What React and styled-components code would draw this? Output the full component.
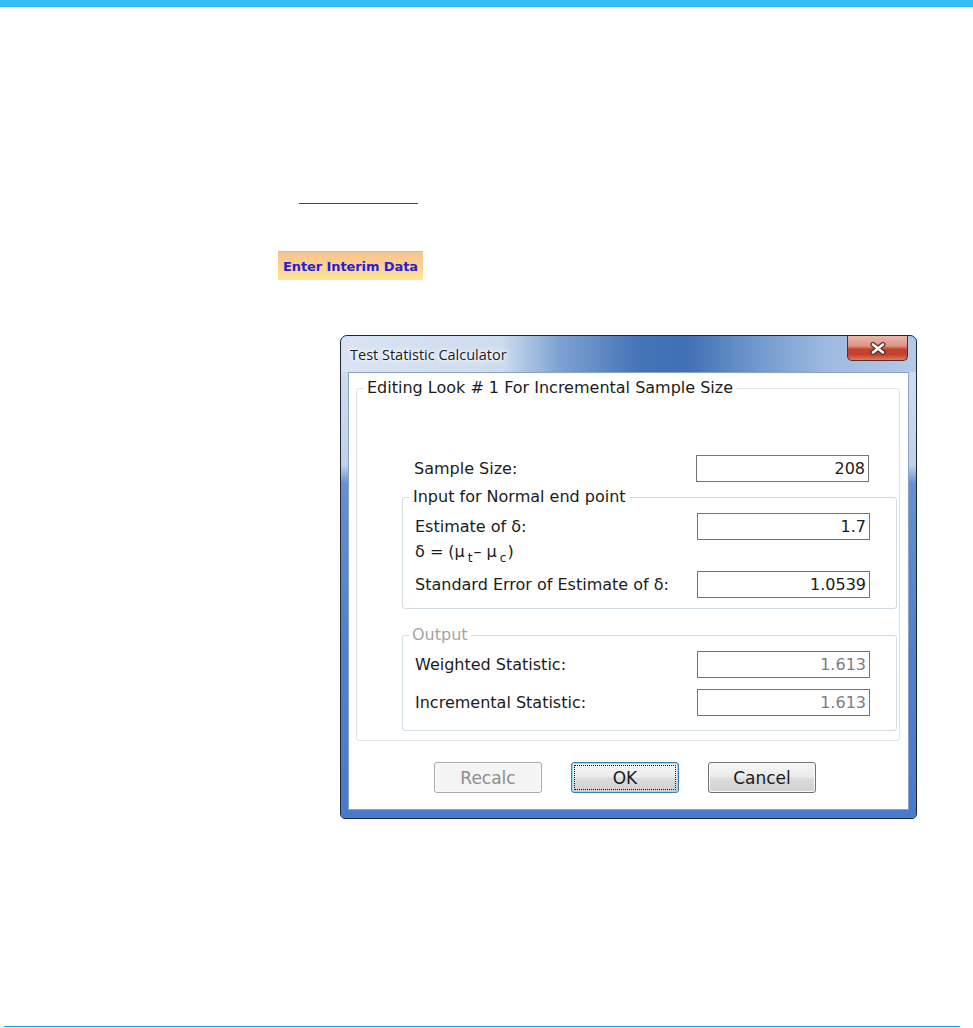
import React from 'react';
import styled, { createGlobalStyle } from 'styled-components';

const GlobalStyle = createGlobalStyle`
  html, body {
    margin: 0;
    padding: 0;
    background: #ffffff;
  }
  body {
    font-family: "DejaVu Sans", "Liberation Sans", sans-serif;
  }
`;

function CloseGlyph() {
  return (
    <svg width="18" height="13" viewBox="0 0 18 13">
      <path d="M4 2.5 L14 10.5 M14 2.5 L4 10.5" stroke="#5a2a24" strokeWidth="5" strokeLinecap="round" fill="none" />
      <path d="M4 2.5 L14 10.5 M14 2.5 L4 10.5" stroke="#ffffff" strokeWidth="2.6" strokeLinecap="round" fill="none" />
    </svg>
  );
}

export default function App() {
  return (
    <Page>
      <GlobalStyle />
      <TopBar />
      <LinkRule />
      <InterimButton>Enter Interim Data</InterimButton>

      <Window>
        <TitleBar>
          <Title>Test Statistic Calculator</Title>
          <CloseButton>
            <CloseGlyph />
          </CloseButton>
        </TitleBar>
        <Frame>
          <Client>
            <Group $outer>
              <Legend>Editing Look # 1 For Incremental Sample Size</Legend>
              <GroupBody>
                <Row $mt={58} $pr={28}>
                  <Label>Sample Size:</Label>
                  <Field>208</Field>
                </Row>

                <Group $mt={6} $pb={10}>
                  <Legend>Input for Normal end point</Legend>
                  <Row $mt={7}>
                    <Label>Estimate of δ:</Label>
                    <Field>1.7</Field>
                  </Row>
                  <Formula>
                    δ = (μ<sub>t</sub>– μ<sub>c</sub>)
                  </Formula>
                  <Row $mt={9}>
                    <Label>Standard Error of Estimate of δ:</Label>
                    <Field>1.0539</Field>
                  </Row>
                </Group>

                <Group $mt={17} $pb={14}>
                  <Legend $muted>Output</Legend>
                  <Row $mt={7}>
                    <Label>Weighted Statistic:</Label>
                    <Field $disabled>1.613</Field>
                  </Row>
                  <Row $mt={11}>
                    <Label>Incremental Statistic:</Label>
                    <Field $disabled>1.613</Field>
                  </Row>
                </Group>
              </GroupBody>
            </Group>

            <ButtonRow>
              <DialogButton $disabled>Recalc</DialogButton>
              <DialogButton $focused>OK</DialogButton>
              <DialogButton>Cancel</DialogButton>
            </ButtonRow>
          </Client>
        </Frame>
      </Window>

      <FooterRule />
    </Page>
  );
}

const Page = styled.div`
  display: flex;
  flex-direction: column;
  height: 1028px;
  overflow: hidden;
`;

const TopBar = styled.div`
  height: 7px;
  background: #35bef3;
`;

const LinkRule = styled.div`
  width: 119px;
  height: 1px;
  margin: 196px 0 0 299px;
  background: #3b3a8c;
`;

const InterimButton = styled.div`
  display: flex;
  align-items: center;
  justify-content: center;
  box-sizing: border-box;
  width: 145px;
  height: 29px;
  margin: 47px 0 0 278px;
  border-top: 1px solid #e6b988;
  background: linear-gradient(180deg, #f7c48f 0%, #fbd092 45%, #fee596 100%);
  color: #2c1cd9;
  font-family: "DejaVu Sans", sans-serif;
  font-weight: bold;
  font-size: 13px;
  letter-spacing: -0.1px;
`;

const Window = styled.div`
  display: flex;
  flex-direction: column;
  box-sizing: border-box;
  width: 577px;
  margin: 55px 0 0 340px;
  border: 1px solid #1f2733;
  border-radius: 7px 7px 5px 5px;
  overflow: hidden;
  background: #4f7dc6;
`;

const TitleBar = styled.div`
  display: flex;
  align-items: center;
  justify-content: space-between;
  height: 36px;
  padding-left: 9px;
  background: linear-gradient(90deg, #d8e4f3 0%, #cddcef 28%, #7da2d2 38%, #4374b6 52%, #3f70b3 60%, #6f98cc 72%, #9cb9df 84%, #b3cae8 100%);
`;

const Title = styled.span`
  font-family: "Open Sans", "Noto Sans", sans-serif;
  font-size: 14.5px;
  color: #1b1b1b;
  text-shadow: 0 0 8px #ffffff, 0 0 5px #ffffff, 0 0 3px #ffffff;
`;

const CloseButton = styled.div`
  display: flex;
  align-items: center;
  justify-content: center;
  align-self: flex-start;
  box-sizing: border-box;
  width: 61px;
  height: 25px;
  margin-right: 8px;
  border: 1px solid #5c2a26;
  border-top: none;
  border-radius: 0 0 5px 5px;
  background: linear-gradient(180deg, #eab7ab 0%, #dc9385 42%, #c4432f 55%, #c2412c 78%, #dc7b5e 100%);
`;

const Frame = styled.div`
  padding: 0 7px 8px 7px;
  background: linear-gradient(180deg, #cfdcef 0%, #bfd1ea 21%, #6690cd 25%, #5380c8 60%, #4a7acb 100%);
`;

const Client = styled.div`
  display: flex;
  flex-direction: column;
  padding: 6px 8px 16px 7px;
  border: 1px solid #8aa3c4;
  background: #ffffff;
`;

const Group = styled.fieldset`
  margin: ${({ $mt }) => $mt || 0}px 0 0 0;
  min-width: 0;
  padding: 0 0 ${({ $outer, $pb }) => ($outer ? 9 : $pb || 0)}px 0;
  border: 1px solid ${({ $outer }) => ($outer ? '#dbe3e9' : '#d3dde4')};
  border-radius: 3px;
`;

const GroupBody = styled.div`
  padding: 0 2px 0 45px;
`;

const Legend = styled.legend`
  margin-left: ${({ $muted }) => ($muted ? 6 : 7)}px;
  padding: 0 3px;
  font-size: 16px;
  line-height: 18px;
  color: ${({ $muted }) => ($muted ? '#a3a3a3' : '#1b1b1b')};
`;

const Row = styled.div`
  display: flex;
  align-items: center;
  justify-content: space-between;
  height: 27px;
  margin-top: ${({ $mt }) => $mt || 0}px;
  padding: 0 ${({ $pr }) => $pr || 26}px 0 12px;
`;

const Label = styled.span`
  font-size: 16px;
  color: #1b1b1b;
`;

const Formula = styled.div`
  height: 20px;
  margin-top: 2px;
  padding-left: 12px;
  font-size: 16px;
  line-height: 20px;
  color: #1b1b1b;

  sub {
    font-size: 12px;
    vertical-align: -5px;
    margin: 0 1px 0 3px;
  }
`;

const Field = styled.div`
  box-sizing: border-box;
  width: 173px;
  height: 27px;
  padding-right: 3px;
  border: 1px solid #737373;
  background: #ffffff;
  text-align: right;
  font-size: 16px;
  line-height: 25px;
  color: ${({ $disabled }) => ($disabled ? '#7c7c86' : '#1b1b1b')};
`;

const ButtonRow = styled.div`
  display: flex;
  justify-content: center;
  gap: 29px;
  margin-top: 21px;
  padding-right: 6px;
`;

const DialogButton = styled.div`
  position: relative;
  display: flex;
  align-items: center;
  justify-content: center;
  box-sizing: border-box;
  width: 108px;
  height: 31px;
  border: 1px solid ${({ $disabled, $focused }) => ($focused ? '#3c7fb1' : $disabled ? '#a9a9a9' : '#707070')};
  border-radius: 3px;
  background: ${({ $disabled }) => ($disabled ? '#f4f4f4' : 'linear-gradient(180deg, #f6f6f6 0%, #ebebeb 48%, #dddddd 52%, #cfcfcf 100%)')};
  box-shadow: ${({ $focused }) => ($focused ? 'inset 0 0 0 1px #9fd6f5' : 'inset 0 0 0 1px #fcfcfc')};
  font-size: 17px;
  color: ${({ $disabled }) => ($disabled ? '#8d8d8d' : '#1b1b1b')};

  &::after {
    content: '';
    display: ${({ $focused }) => ($focused ? 'block' : 'none')};
    position: absolute;
    inset: 2px;
    border: 1px dotted #1b1b1b;
  }
`;

const FooterRule = styled.div`
  height: 1px;
  margin: auto 13px 1px 4px;
  background: #1e9bd7;
`;
